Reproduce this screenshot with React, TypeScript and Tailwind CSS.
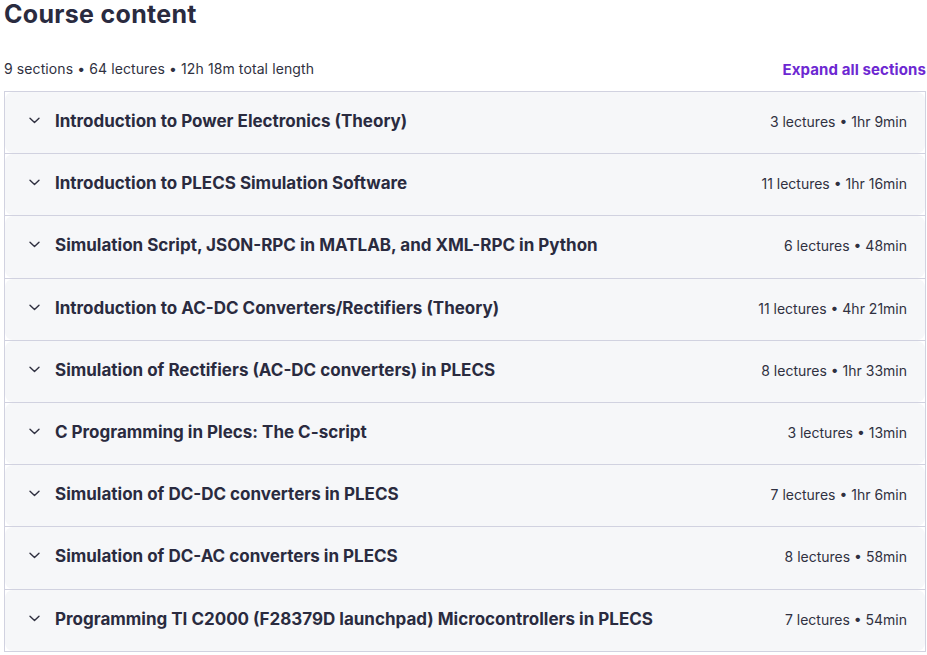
const sections = [
  { title: "Introduction to Power Electronics (Theory)", meta: "3 lectures • 1hr 9min" },
  { title: "Introduction to PLECS Simulation Software", meta: "11 lectures • 1hr 16min" },
  { title: "Simulation Script, JSON-RPC in MATLAB, and XML-RPC in Python", meta: "6 lectures • 48min" },
  { title: "Introduction to AC-DC Converters/Rectifiers (Theory)", meta: "11 lectures • 4hr 21min" },
  { title: "Simulation of Rectifiers (AC-DC converters) in PLECS", meta: "8 lectures • 1hr 33min" },
  { title: "C Programming in Plecs: The C-script", meta: "3 lectures • 13min" },
  { title: "Simulation of DC-DC converters in PLECS", meta: "7 lectures • 1hr 6min" },
  { title: "Simulation of DC-AC converters in PLECS", meta: "8 lectures • 58min" },
  { title: "Programming TI C2000 (F28379D launchpad) Microcontrollers in PLECS", meta: "7 lectures • 54min" },
];

function Chevron() {
  return (
    <svg width="11" height="7" viewBox="0 0 11 7" fill="none" className="mb-[1px] shrink-0">
      <path d="M1 1.2 L5.5 5.6 L10 1.2" stroke="#303141" strokeWidth="1.4" strokeLinecap="round" strokeLinejoin="round" />
    </svg>
  );
}

export default function App() {
  return (
    <main
      className="min-h-screen w-full bg-white pl-[4px] pr-[1px] text-[#2d2f31]"
      style={{ fontFamily: "Inter, 'Noto Sans', sans-serif" }}
    >
      {/* Heading */}
      <h2 className="text-[25px] font-bold leading-[28px] tracking-[0.3px] text-[#2a2b3f]">
        Course content
      </h2>

      {/* Summary bar */}
      <div className="mt-[31px] mb-[12px] flex items-center justify-between">
        <span className="text-[14px] leading-[18px] tracking-[0.1px] text-[#303141]">
          9 sections • 64 lectures • 12h 18m total length
        </span>
        <button className="mt-[2px] text-[15px] font-bold leading-[18px] tracking-[0.1px] text-[#6d28d2]">
          Expand all sections
        </button>
      </div>

      {/* Sections */}
      <div className="border border-[#d1d2e0]">
        {sections.map((s, i) => (
          <div
            key={i}
            className={i < sections.length - 1 ? "border-b border-[#d1d2e0]" : ""}
          >
            <div className="flex h-[61.2px] items-center justify-between rounded-lg bg-[#f6f7f9] pb-[3px] pl-[24px] pr-[18px]">
              <div className="flex items-center gap-[15px]">
                <Chevron />
                <span className="text-[17px] font-bold leading-[20px] text-[#2a2b3f]">
                  {s.title}
                </span>
              </div>
              <span className="mt-[2px] text-[14px] leading-[18px] text-[#303141]">{s.meta}</span>
            </div>
          </div>
        ))}
      </div>
    </main>
  );
}
